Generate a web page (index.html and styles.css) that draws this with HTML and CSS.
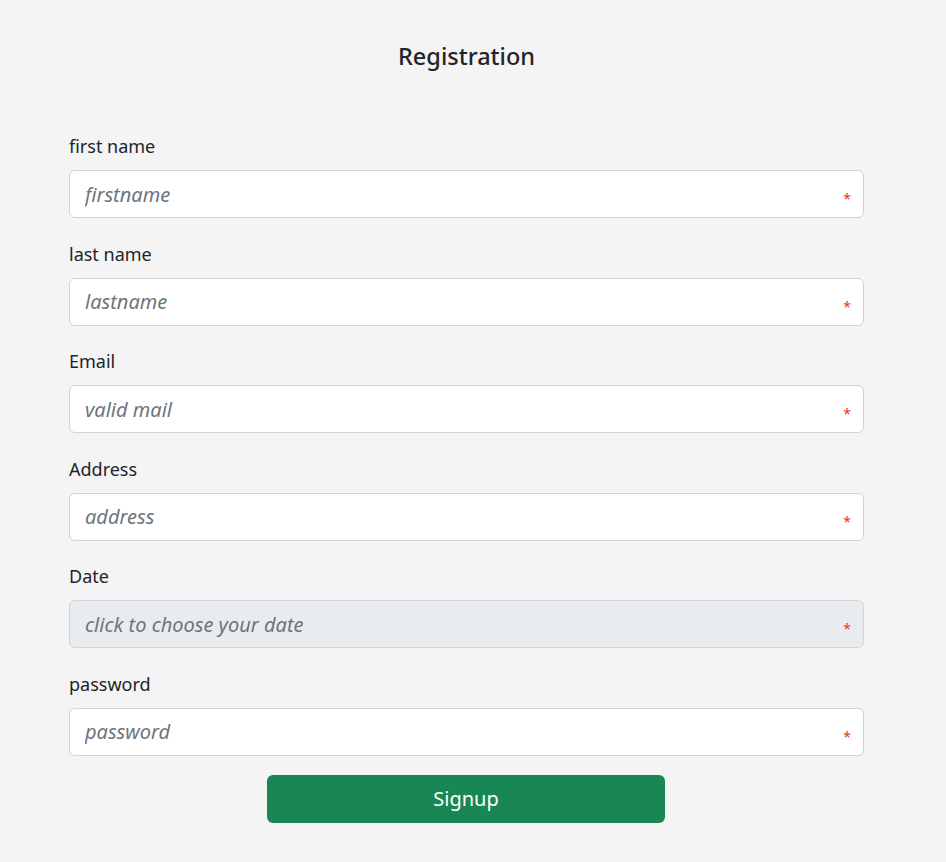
FILE: index.html
```html
<!DOCTYPE html>
<html lang="en">
<head>
<meta charset="utf-8">
<title>Registration</title>
<link rel="stylesheet" href="styles.css">
</head>
<body>
<main class="page">
  <h4 class="title">Registration</h4>
  <form class="form">
    <div class="field">
      <label class="label">first name</label>
      <div class="control">
        <input class="input" type="text" placeholder="firstname">
        <span class="req">*</span>
      </div>
    </div>
    <div class="field">
      <label class="label">last name</label>
      <div class="control">
        <input class="input" type="text" placeholder="lastname">
        <span class="req">*</span>
      </div>
    </div>
    <div class="field">
      <label class="label">Email</label>
      <div class="control">
        <input class="input" type="email" placeholder="valid mail">
        <span class="req">*</span>
      </div>
    </div>
    <div class="field">
      <label class="label">Address</label>
      <div class="control">
        <input class="input" type="text" placeholder="address">
        <span class="req">*</span>
      </div>
    </div>
    <div class="field">
      <label class="label">Date</label>
      <div class="control">
        <input class="input input-readonly" type="text" placeholder="click to choose your date" readonly>
        <span class="req">*</span>
      </div>
    </div>
    <div class="field field-last">
      <label class="label">password</label>
      <div class="control">
        <input class="input" type="password" placeholder="password">
        <span class="req">*</span>
      </div>
    </div>
    <div class="actions">
      <button class="btn" type="button">Signup</button>
    </div>
  </form>
</main>
</body>
</html>
```
FILE: styles.css
```css
* { box-sizing: border-box; }
html, body {
  margin: 0;
  padding: 0;
  background: #f4f4f4;
}
body {
  font-family: "Noto Sans", "Open Sans", sans-serif;
  color: #212529;
}
.page {
  width: 795px;
  margin-left: 69px;
  padding-top: 40px;
}
.title {
  margin: 0 0 61px;
  text-align: center;
  font-size: 23.5px;
  font-weight: 500;
  line-height: 32px;
}
.field {
  margin-bottom: 22.5px;
}
.field-last {
  margin-bottom: 19px;
}
.label {
  display: block;
  font-size: 18px;
  line-height: 27px;
  margin-bottom: 10px;
}
.control {
  position: relative;
}
.input {
  display: block;
  width: 100%;
  height: 48px;
  padding: 8px 15px;
  font-family: inherit;
  font-size: 20px;
  line-height: 30px;
  color: #212529;
  background: #fff;
  border: 1px solid #ced4da;
  border-radius: 6px;
  outline: none;
}
.input::placeholder {
  color: #6c757d;
  font-style: italic;
}
.input-readonly {
  background: #e9ecef;
}
.req {
  position: absolute;
  right: 13px;
  top: 21px;
  color: #f0361f;
  font-size: 14px;
  line-height: 16px;
}
.actions {
  display: flex;
  padding-left: 198px;
}
.btn {
  width: 398px;
  height: 48px;
  background: #198754;
  color: #fff;
  border: 0;
  border-radius: 6px;
  font-family: inherit;
  font-size: 20px;
}
```
